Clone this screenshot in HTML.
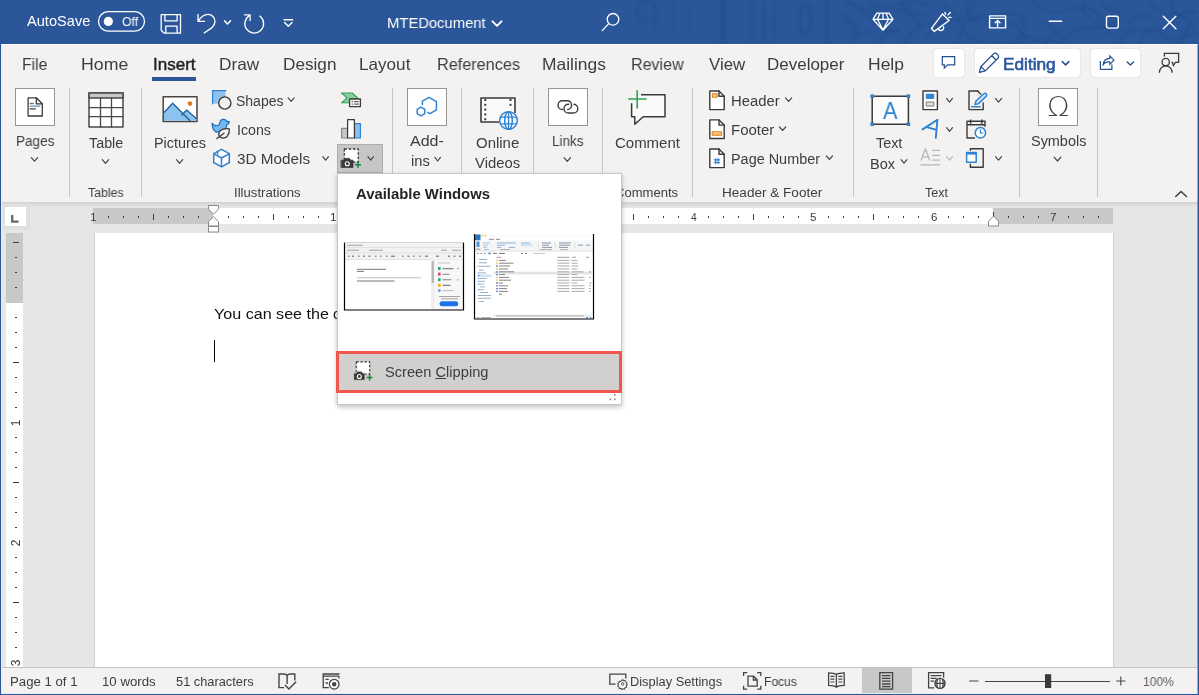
<!DOCTYPE html>
<html lang="en">
<head>
<meta charset="utf-8">
<title>MTEDocument - Word</title>
<style>
html,body{margin:0;padding:0}
body{width:1199px;height:695px;overflow:hidden;position:relative;background:#e6e6e6;font-family:"Liberation Sans",sans-serif;}
.abs{position:absolute}
.t{position:absolute;white-space:nowrap;line-height:normal;transform-origin:0 0;display:block;will-change:transform}
.t u{text-decoration:underline;text-underline-offset:1px;text-decoration-thickness:1px}
#titlebar{position:absolute;left:0;top:0;width:1199px;height:44px;background:#2b579a;overflow:hidden}
#tabs{position:absolute;left:1px;top:44px;width:1197px;height:40px;background:#f3f2f1}
#ribbon{position:absolute;left:1px;top:84px;width:1197px;height:118px;background:#f3f2f1}
#ribbonshadow{position:absolute;left:1px;top:202px;width:1197px;height:5px;background:linear-gradient(#d2d2d2,#e6e6e6)}
.box{position:absolute;background:#fff;border:1px solid #979593;box-sizing:border-box}
.sep{position:absolute;width:1px;background:#c8c6c4;top:88px;height:109px}
.pill{position:absolute;background:#fff;border-radius:3px;box-shadow:0 0 1.5px rgba(0,0,0,.22)}
#docarea{position:absolute;left:1px;top:207px;width:1197px;height:461px;background:#e6e6e6}
#page{position:absolute;left:94px;top:233px;width:1020px;height:435px;background:#fff;border-left:1px solid #d0d0d0;border-right:1px solid #d0d0d0;box-sizing:border-box}
#status{position:absolute;left:1px;top:667px;width:1197px;height:27px;background:#f3f2f1;border-top:1px solid #c4c4c4;box-sizing:border-box}
#frame{position:absolute;left:0;top:0;width:1199px;height:695px;box-sizing:border-box;border:1px solid #2b579a;border-top:none;pointer-events:none}
#dropdown{position:absolute;left:337px;top:173px;width:285px;height:232px;background:#fff;border:1px solid #c8c6c4;box-sizing:border-box;box-shadow:0 2px 5px rgba(0,0,0,.25)}
.vn{position:absolute;width:14px;height:14px;line-height:14px;font-size:12px;text-align:center;color:#3b3a39;transform:rotate(-90deg);transform-origin:50% 50%}
#frameinner{position:absolute;left:1px;top:44px;width:1197px;height:650px;box-sizing:border-box;border:1px solid #e4eefa;border-top-color:#fff;border-right-color:rgba(43,87,154,.45);pointer-events:none}
svg{position:absolute;left:0;top:0;overflow:visible}
</style>
</head>
<body>

<div id="titlebar">
<svg width="1199" height="44" viewBox="0 0 1199 44" fill="none" stroke="#1d437f" stroke-linecap="round">
<g stroke-width="3.500" stroke-opacity=".26" style="filter:blur(1.1px)">
<path d="M655 13a9 10 0 1 1-1-6M655 2v28"/>
<path d="M674 0v30M690 6v26"/>
<path d="M723 0v44" stroke-width="8"/>
<path d="M752 0v44M764 4v36" />
<path d="M775 4c-2 10-2 24 0 36"/>
<path d="M805 4a6 15 0 1 0 .1 0M827 0v42" stroke-width="4.500"/>
</g>
<g stroke-width="2.300" stroke-opacity=".34" style="filter:blur(1px)">
<path d="M846 2c10 2 18 8 24 16s16 14 28 14"/>
<path d="M845 22c6-2 10 0 14 4M850 40c8-8 18-10 28-4"/>
<path d="M868 0c6 8 18 10 28 6s22-6 30 0"/>
<path d="M905 44c6-16 22-24 38-22s28-6 32-22"/>
<path d="M898 10c10 2 18 8 22 16"/>
<path d="M960 44c-2-14 8-26 22-28s30 4 38 14 22 14 36 10"/>
<path d="M985 24a20 14 0 1 1 40 6"/>
<path d="M1030 0c10 10 24 14 38 10s26-2 34 8 20 14 32 10"/>
<path d="M1060 44c6-12 18-18 32-16s28-4 34-14"/>
<path d="M1120 44c4-10 14-16 26-14s22-2 28-10 16-10 25-8"/>
<path d="M1150 0c2 8 10 14 20 14s20 6 24 16"/>
<path d="M1160 30a14 10 0 1 0 28-4"/>
<path d="M1085 0c-4 8-2 14 6 18M1010 44c4-6 10-8 18-6"/>
<path d="M842 14c8 6 14 14 16 24M858 8c10 0 20 6 26 14"/>
<path d="M880 44c2-10 10-16 20-14M900 0c4 10 14 16 26 14"/>
<path d="M925 36c8-2 14-8 16-16M938 2c10 4 18 12 22 22s12 16 22 18"/>
<path d="M968 0c-4 10 0 18 10 22M995 40a14 9 0 1 0 26-8"/>
<path d="M1040 20c8 2 14 8 16 16M1046 44c2-8 8-12 16-12"/>
<path d="M1090 24c8-2 16 2 20 10M1100 0c2 8 10 12 20 10"/>
<path d="M1128 22c6-6 16-8 24-4M1140 44c0-8 6-14 14-14"/>
<path d="M1172 0c-2 8 2 14 10 16M1180 44c2-6 8-10 18-10"/>
</g>
</svg>

</div>
<div id="tabs"></div>
<div id="ribbon"></div>
<div id="ribbonshadow"></div>
<div id="docarea"></div>

<!-- ===== title bar ===== -->
<div id="titletext">
<span class="t" style="left:26.85px;top:13.30px;font-size:14.5px;color:#fff;transform:scaleX(1.0068)">AutoSave</span>
<span class="t" style="left:121.59px;top:13.70px;font-size:13px;color:#fff;transform:scaleX(0.9495)">Off</span>
<span class="t" style="left:387.12px;top:14.10px;font-size:15px;color:#fff;transform:scaleX(0.9855)">MTEDocument</span>
</div>
<svg width="1199" height="44" viewBox="0 0 1199 44" fill="none" stroke="#fff" stroke-width="1.3" stroke-linecap="round" stroke-linejoin="round">
<!-- autosave toggle -->
<rect x="98.5" y="11.7" width="46" height="19.4" rx="9.7"/>
<circle cx="108.3" cy="21.4" r="4.6" fill="#fff" stroke="none"/>
<!-- save -->
<path d="M161.2 14.6h19.3v18.6h-16.3l-3-3zM164.9 14.6v6.3h12.2v-6.3M165.8 33.2v-7h11.3v7"/>
<!-- undo -->
<path d="M198 14.5v6.8h6.6M198.4 21c2.5-4 6-6.600 9.600-6.600 4 0 7 3.200 7 7 0 2.600-1.200 4.400-3 6.200l-7.800 5.400" />
<path d="M224.500 20.700l3 3.200 3-3.200" stroke-width="1.500"/>
<!-- redo -->
<path d="M244.500 14.800h5.600v5.800M249.600 15.500a9.400 9.400 0 1 0 10.200 0.600"/>
<!-- qat -->
<path d="M284 19.800h8.600M284.600 22.600l3.700 3.600 3.700-3.600" stroke-width="1.400"/>
<!-- doc title chevron -->
<path d="M492.500 21.300l4.500 4.600 4.500-4.600" stroke-width="1.900"/>
<!-- search -->
<circle cx="613" cy="19.300" r="5.800"/><path d="M608.800 23.600l-6.600 7"/>
<!-- diamond -->
<path d="M876.800 13.200h12.400l3.800 6.100-10 10.900-10-10.900zM873 19.300h20M879.800 13.400l-2.300 5.900 5.500 10.700 5.500-10.700-2.300-5.900M883 13.300v6"/>
<!-- megaphone -->
<path d="M942.500 13.900l6.600 6.600-14.800 10.900-2.800-3zM938.300 28.600a2.700 2.700 0 0 0 5.200-1.600M945 12.400l.5 1.600M948 14.800l2.400-2.300M948.800 17.500l2.200-.1" stroke-width="1.400"/>
<!-- ribbon display options -->
<path d="M989.600 15.900h16v12h-16zM989.600 18.400h16M997.600 26.400v-5.800M995.200 22.800l2.400-2.400 2.400 2.400" stroke-width="1.400"/>
<!-- window controls -->
<path d="M1049.300 21.300h12.400" stroke-width="1.400"/>
<rect x="1106.500" y="16.300" width="11.800" height="11.800" rx="2" stroke-width="1.400"/>
<path d="M1163.300 16.200l12.600 12.600M1175.900 16.200l-12.600 12.600" stroke-width="1.400"/>
</svg>


<!-- ===== tabs ===== -->
<div id="tabrow">
<div class="abs" style="left:152px;top:77px;width:44px;height:4px;background:#2b579a"></div>
<div class="pill" style="left:934px;top:49.200px;width:30.300px;height:27.800px"></div>
<div class="pill" style="left:975.300px;top:49.200px;width:104.700px;height:27.800px"></div>
<div class="pill" style="left:1091.200px;top:49.200px;width:49px;height:27.800px"></div>
<svg width="1199" height="90" viewBox="0 0 1199 90" fill="none" stroke="#27508f" stroke-width="1.3" stroke-linecap="round" stroke-linejoin="round">
<!-- comments button -->
<path d="M942.300 56.700h12.400v8.100h-7.100l-3.300 3.300v-3.300h-2z" stroke-width="1.200" stroke-linejoin="miter"/>
<!-- pencil -->
<path d="M979.400 72.400l1.500-5.900 12.600-12.600a2.400 2.400 0 0 1 3.400 0l1 1a2.400 2.400 0 0 1 0 3.400l-12.600 12.600zM981 66.600l4.300 4.300M991.800 55.700l4.300 4.300" stroke-width="1.300"/>
<path d="M1062.300 61.600l3.300 3.300 3.300-3.300" stroke-width="1.500"/>
<!-- share -->
<path d="M1100.400 61.100V69.400H1111.900V64.600M1109.800 55.900L1113.900 60.200L1109.800 64.400V62C1106.800 61.800 1104.600 62.600 1103.200 64.600C1103.600 60.800 1106 58.600 1109.800 58.400Z" stroke-width="1.200" stroke-linecap="butt" stroke-linejoin="miter"/>
<path d="M1127.200 61.900l3.200 3.100 3.200-3.100" stroke-width="1.400"/>
<!-- people / catch up -->
<g stroke="#3b3a39" stroke-width="1.300" stroke-linecap="butt" stroke-linejoin="miter">
<circle cx="1165.700" cy="62.100" r="3.700"/>
<path d="M1159.300 72.800a6.450 7 0 0 1 12.900 0"/>
<path d="M1164.400 56.600v-3.200h14.200v9h-3.200l-2 3.100-.9-3.100h-1.100"/>
</g>
</svg>

<span class="t" style="left:21.96px;top:54.50px;font-size:16.5px;color:#3d3d3d;transform:scaleX(0.9517)">File</span>
<span class="t" style="left:81.23px;top:54.50px;font-size:16.5px;color:#3d3d3d;transform:scaleX(1.0730)">Home</span>
<span class="t" style="left:152.96px;top:54.50px;font-size:16.5px;color:#252423;-webkit-text-stroke:.45px #252423;transform:scaleX(1.0306)">Insert</span>
<span class="t" style="left:219.33px;top:54.50px;font-size:16.5px;color:#3d3d3d;transform:scaleX(1.0464)">Draw</span>
<span class="t" style="left:283.42px;top:54.50px;font-size:16.5px;color:#3d3d3d;transform:scaleX(1.0408)">Design</span>
<span class="t" style="left:359.41px;top:54.50px;font-size:16.5px;color:#3d3d3d;transform:scaleX(1.0374)">Layout</span>
<span class="t" style="left:436.60px;top:54.50px;font-size:16.5px;color:#3d3d3d;transform:scaleX(0.9832)">References</span>
<span class="t" style="left:542.29px;top:54.50px;font-size:16.5px;color:#3d3d3d;transform:scaleX(1.0564)">Mailings</span>
<span class="t" style="left:630.61px;top:54.50px;font-size:16.5px;color:#3d3d3d;transform:scaleX(0.9728)">Review</span>
<span class="t" style="left:708.96px;top:54.50px;font-size:16.5px;color:#3d3d3d;transform:scaleX(1.0243)">View</span>
<span class="t" style="left:767.44px;top:54.50px;font-size:16.5px;color:#3d3d3d;transform:scaleX(1.0290)">Developer</span>
<span class="t" style="left:868.31px;top:54.50px;font-size:16.5px;color:#3d3d3d;transform:scaleX(1.0598)">Help</span>
<span class="t" style="left:1003.21px;top:54.50px;font-size:16.5px;color:#2b579a;-webkit-text-stroke:.6px #2b579a;transform:scaleX(1.0439)">Editing</span>
</div>

<!-- ===== ribbon ===== -->
<div id="ribboncontent">
<div class="box" style="left:15px;top:88px;width:40px;height:38px"></div>
<div class="box" style="left:407px;top:88px;width:40px;height:38px"></div>
<div class="box" style="left:548px;top:88px;width:40px;height:38px"></div>
<div class="box" style="left:1038px;top:88px;width:40px;height:38px"></div>
<div class="abs" style="left:337px;top:144px;width:46px;height:29px;background:#c8c6c4;border:1px solid #b0aeac;box-sizing:border-box"></div>
<div class="sep" style="left:69px"></div>
<div class="sep" style="left:141px"></div>
<div class="sep" style="left:392px"></div>
<div class="sep" style="left:461px"></div>
<div class="sep" style="left:533px"></div>
<div class="sep" style="left:602px"></div>
<div class="sep" style="left:692px"></div>
<div class="sep" style="left:853px"></div>
<div class="sep" style="left:1019px"></div>
<div class="sep" style="left:1097px"></div>
<svg width="1199" height="210" viewBox="0 0 1199 210" fill="none" stroke="#3b3a39" stroke-width="1.3" stroke-linecap="round" stroke-linejoin="round">
<g><path d="M28.100 97.800h8.200l6 6v12.200h-14.200z" fill="#fff"/><path d="M36.300 97.800v6h6"/><path d="M30.300 103.500h2.800M30.300 108.900h5" stroke="#797775" stroke-width="1.600"/><path d="M30.300 106.100h9.500" stroke="#5c8fc0" stroke-width="1.400"/></g>
<path d="M31.3 157.6L34.5 161.2L37.7 157.6" stroke="#484644" stroke-width="1.2"/>
<g stroke="#4a4846" stroke-width="1.500"><rect x="89" y="93" width="34" height="34" fill="#fff"/><rect x="89" y="93" width="34" height="5" fill="#c8c6c4"/><path d="M100.500 98v29M111.500 98v29M89 107.600h34M89 116.600h34" stroke-width="1.300"/></g>
<path d="M102.3 159.7L105.5 163.3L108.7 159.7" stroke="#484644" stroke-width="1.2"/>
<g><rect x="163.200" y="96.700" width="33.800" height="24.800" fill="#fff" stroke="#484644" stroke-width="1.500"/><path d="M164 112.500l8.700-9.200 17.500 17.500h-26.200z" fill="#8ec2ee" stroke="none"/><path d="M181.600 115.100l5.100-5.100 9.500 8.600v2.200h-9z" fill="#8ec2ee" stroke="none"/><path d="M164 112.500l8.700-9.200 17.300 17.500M181.800 115l4.900-5 9.500 8.600" stroke="#1f5f9e" stroke-width="1.300"/><circle cx="190" cy="103.600" r="2.300" fill="#e07b1a" stroke="none"/></g>
<path d="M176.5 159.7L179.6 163.3L182.7 159.7" stroke="#484644" stroke-width="1.2"/>
<g><path d="M212.600 90.600h13v13h-13z" fill="#8ec2ee" stroke="none"/><path d="M212.600 103.800v-13.200h13.200" stroke="#2e83d1" stroke-width="1.300"/><circle cx="224.800" cy="103" r="6.100" fill="#f3f2f1" stroke="#3b3a39" stroke-width="1.400"/></g>
<path d="M288.1 97.9L291.1 101.3L294.2 97.9" stroke="#484644" stroke-width="1.2"/>
<g><path d="M212.200 123.200C213.500 125.600 216 126.200 218.600 125C219.600 124.400 219.800 123.600 219.900 122.600C220.100 120.400 221.600 119.300 223.400 119.300C225.400 119.300 226.600 120.400 227.200 121.800L229.400 121.700C229.200 123.400 228.200 124.400 226.800 124.800C226.600 127.400 225.200 129.600 223 130.600L216.200 132.200C213.600 130.600 212 127.200 212.200 123.200Z" fill="#74b8ef" stroke="#1e6fb8" stroke-width="1.200"/><path d="M229.300 128.800C229.800 134.600 226.600 138.600 222.200 138C219 137.400 217.800 134.400 219.400 131.800C221.200 129.200 225 128.400 229.300 128.800Z" fill="#f3f2f1" stroke="#3b3a39" stroke-width="1.300"/><path d="M216.900 138.500L224 133.200" stroke="#3b3a39" stroke-width="1.300"/></g>
<g stroke="#2e83d1" stroke-width="1.500"><path d="M221.500 149.400l7.800 4.300v8.800l-7.800 4.300-7.800-4.300v-8.800z" fill="#fff"/><path d="M213.900 153.800l7.600 4.200 7.600-4.200M221.500 158v8.600M217.600 151.600v2.400"/></g>
<path d="M322.8 156.7L325.6 160.2L328.5 156.7" stroke="#484644" stroke-width="1.2"/>
<g><path d="M341.500 93h10.600l5.600 4.800-3 2.400h-4.400v2.600h-8.800l5.600-5z" fill="#86cf9c" stroke="#2f9e5b" stroke-width="1.100"/><rect x="349.600" y="99" width="10.800" height="7.600" fill="#fff" stroke="#3b3a39" stroke-width="1.300"/><path d="M352 101.600h.6M352 104.100h.6M354.400 101.600h4M354.400 104.100h4" stroke="#605e5c" stroke-width="1.100"/></g>
<g stroke-width="1.200"><rect x="341.600" y="128.400" width="5.800" height="9.600" fill="#c8c6c4" stroke="#8a8886"/><rect x="354.600" y="123.600" width="5.800" height="14.400" fill="#8ec2ee" stroke="#2e83d1"/><rect x="347.600" y="119.600" width="6.800" height="18.400" fill="#fff" stroke="#3b3a39"/></g>
<g><rect x="344.300" y="149" width="14" height="13" fill="#fff" stroke="#3b3a39" stroke-width="1.300" stroke-dasharray="2.600 1.700" stroke-linecap="butt"/><path d="M341.400 160.200h2.600l1-1.800h4.600l1 1.800h2.400v7.200h-11.600z" fill="#3b3a39" stroke="#3b3a39" stroke-width=".8"/><circle cx="347.300" cy="163.700" r="2" fill="#3b3a39" stroke="#fff" stroke-width="1.100"/><path d="M355 164.800h6M358 161.800v6" stroke="#13883f" stroke-width="1.500" stroke-linecap="butt"/></g>
<path d="M367.9 156.7L370.7 160.2L373.5 156.7" stroke="#484644" stroke-width="1.2"/>
<g stroke="#2e83d1" stroke-width="1.500"><path d="M422.400 104.600v-3.400l6.600-3.800 7.400 4.200v8.200l-6.400 3.800-2.200-1.200"/><path d="M421 107.200l3.800 2.200v4.200l-3.800 2.200-3.800-2.200v-4.200z"/></g>
<path d="M434.9 157.4L437.7 161.0L440.5 157.4" stroke="#484644" stroke-width="1.2"/>
<g><path d="M515 113v-15h-34v24h18" fill="#fafafa" stroke="#3b3a39" stroke-width="1.600" stroke-linecap="butt"/>
<rect x="484.300" y="99.0" width="2" height="2" fill="#3b3a39" stroke="none"/>
<rect x="484.300" y="103.8" width="2" height="2" fill="#3b3a39" stroke="none"/>
<rect x="484.300" y="108.6" width="2" height="2" fill="#3b3a39" stroke="none"/>
<rect x="484.300" y="113.4" width="2" height="2" fill="#3b3a39" stroke="none"/>
<rect x="484.300" y="118.2" width="2" height="2" fill="#3b3a39" stroke="none"/>
<rect x="509.500" y="99.0" width="2" height="2" fill="#3b3a39" stroke="none"/>
<rect x="509.500" y="103.8" width="2" height="2" fill="#3b3a39" stroke="none"/>
<g stroke="#2e83d1" stroke-width="1.500"><circle cx="508.500" cy="120.500" r="8.800" fill="#fff"/><ellipse cx="508.500" cy="120.500" rx="3.800" ry="8.800"/><path d="M500.600 117.200h15.800M500.600 123.800h15.800M508.500 111.700v17.600" stroke-width="1.300"/></g></g>
<path d="M563 109.500h-.65a4.350 4.350 0 0 1 0-8.700h4.900a4.350 4.350 0 0 1 0 8.700M569.200 104.300h-.85a4.350 4.350 0 0 0 0 8.700h5.100a4.350 4.350 0 0 0 0-8.700" stroke-width="1.400" stroke-linecap="butt"/>
<path d="M564.1 157.6L567.3 161.4L570.5 157.6" stroke="#484644" stroke-width="1.2"/>
<g><path d="M641 94.800h24v22h-21.800l-8.400 7.400v-7.400h-3.200v-13.600" fill="#fafafa" stroke="#3b3a39" stroke-width="1.500" stroke-linecap="butt"/><path d="M628.200 99h18.400M637.200 90.200v18.200" stroke="#2da44e" stroke-width="1.600" stroke-linecap="butt"/></g>
<g stroke-width="1.400"><path d="M709.8 91.0h9.2l5.2 5.2v13.4h-14.4z" fill="#fff"/><path d="M719.0 91.0v5.2h5.2"/><rect x="712.400" y="93.800" width="4.800" height="3.400" fill="#f6c98f" stroke="#e3851c" stroke-width="1.100"/></g>
<g stroke-width="1.400"><path d="M709.8 119.9h9.2l5.2 5.2v13.4h-14.4z" fill="#fff"/><path d="M719.0 119.9v5.2h5.2"/><rect x="712.200" y="131.700" width="9.400" height="3.400" fill="#f6c98f" stroke="#e3851c" stroke-width="1.100"/></g>
<g stroke-width="1.400"><path d="M709.8 149.0h9.2l5.2 5.2v13.4h-14.4z" fill="#fff"/><path d="M719.0 149.0v5.2h5.2"/><path d="M715.600 158.200v6M718.200 158.200v6M713.800 159.900h6.200M713.800 162.500h6.200" stroke="#2e83d1" stroke-width="1.200" stroke-linecap="butt"/></g>
<path d="M785.5 97.9L788.6 101.3L791.7 97.9" stroke="#484644" stroke-width="1.2"/>
<path d="M779.5 127.0L782.6 130.4L785.7 127.0" stroke="#484644" stroke-width="1.2"/>
<path d="M826.3 156.0L829.4 159.4L832.5 156.0" stroke="#484644" stroke-width="1.2"/>
<g><rect x="872.200" y="96.200" width="36.200" height="28" fill="#fcfcfc" stroke="#3b3a39" stroke-width="1.500"/>
<rect x="870.4" y="94.4" width="3.600" height="3.600" fill="#2e83d1" stroke="none"/>
<rect x="906.6" y="94.4" width="3.600" height="3.600" fill="#2e83d1" stroke="none"/>
<rect x="870.4" y="122.4" width="3.600" height="3.600" fill="#2e83d1" stroke="none"/>
<rect x="906.6" y="122.4" width="3.600" height="3.600" fill="#2e83d1" stroke="none"/>
</g>
<path d="M901.1 159.6L904.0 163.2L906.9 159.6" stroke="#484644" stroke-width="1.2"/>
<g stroke-width="1.400"><rect x="923" y="91" width="14.400" height="18.600" fill="#fff"/><rect x="926.600" y="94.200" width="7.200" height="4.200" fill="#2e83d1" stroke="#2e83d1" stroke-width="1"/><rect x="926.600" y="102" width="7.200" height="4" fill="#e1dfdd" stroke="#797775" stroke-width="1"/></g>
<path d="M946.6 98.4L949.5 102.1L952.5 98.4" stroke="#484644" stroke-width="1.2"/>
<path d="M922.600 129.400l14.800-9.600-1.600 18M927.600 127.300l9 2.500" stroke="#2e83d1" stroke-width="1.900"/>
<path d="M946.6 127.6L949.5 131.3L952.5 127.6" stroke="#484644" stroke-width="1.2"/>
<g stroke="#b8b6b4" stroke-width="1.300" stroke-linecap="butt"><path d="M921 160.600l4.400-11.800 4.400 11.800M922.600 156.800h5.600"/><path d="M932.400 150.300h7.400M932.400 155.300h7.400M932.400 160.200h7.400M920.400 164.800h19.400"/></g>
<path d="M946.6 156.7L949.5 160.1L952.5 156.7" stroke="#b8b6b4" stroke-width="1.2"/>
<g stroke-width="1.400"><path d="M977.600 91h-8.600v18.600h14.200v-6.600" /><path d="M977.600 91l3 3" /><path d="M975 104.600l1-3.600 7.800-7.200a1.600 1.600 0 0 1 2.400 2.400l-7.600 7.400zM971.600 106.700h8.600" stroke="#2e83d1" stroke-width="1.500" fill="#cfe4f7"/></g>
<path d="M995.5 98.4L998.5 102.1L1001.6 98.4" stroke="#484644" stroke-width="1.2"/>
<g stroke-width="1.400"><path d="M975 138h-8v-16.800h18v5.600M967 124.800h18M970.600 119.400v4.400M981.800 119.400v4.400" stroke-linecap="butt"/><circle cx="980.400" cy="132.800" r="5.200" fill="#fff" stroke="#2e83d1" stroke-width="1.500"/><path d="M980.400 129.800v3.200h2.600" stroke="#2e83d1" stroke-width="1.200"/></g>
<g stroke-width="1.400"><path d="M970.400 150.800v-2h12.800v18.400h-12.800v-3.400" stroke-linecap="butt"/><rect x="966.600" y="152.600" width="9.600" height="9.600" fill="#fff" stroke="#2e83d1" stroke-width="1.500"/><path d="M966.600 153.400h9.600" stroke="#2e83d1" stroke-width="2.400" stroke-linecap="butt"/></g>
<path d="M995.5 156.7L998.5 160.1L1001.6 156.7" stroke="#484644" stroke-width="1.2"/>
<path d="M1054.1 157.2L1057.5 161.0L1060.9 157.2" stroke="#484644" stroke-width="1.2"/>
<path d="M1175.700 196.600l5.400-5.200 5.400 5.200" stroke-width="1.400"/>
</svg>

<span class="t" style="left:16.28px;top:133.00px;font-size:14px;color:#3d3d3d;transform:scaleX(0.9663)">Pages</span>
<span class="t" style="left:88.58px;top:135.00px;font-size:14px;color:#3d3d3d;transform:scaleX(1.0242)">Table</span>
<span class="t" style="left:154.22px;top:135.00px;font-size:14px;color:#3d3d3d;transform:scaleX(1.0293)">Pictures</span>
<span class="t" style="left:236.10px;top:93.00px;font-size:14px;color:#3d3d3d;transform:scaleX(0.9910)">Shapes</span>
<span class="t" style="left:237.38px;top:122.00px;font-size:14px;color:#3d3d3d;transform:scaleX(1.0149)">Icons</span>
<span class="t" style="left:236.84px;top:151.00px;font-size:14px;color:#3d3d3d;transform:scaleX(1.0912)">3D Models</span>
<span class="t" style="left:409.79px;top:133.00px;font-size:14px;color:#3d3d3d;transform:scaleX(1.1455)">Add-</span>
<span class="t" style="left:411.10px;top:153.00px;font-size:14px;color:#3d3d3d;transform:scaleX(1.0485)">ins</span>
<span class="t" style="left:476.03px;top:135.00px;font-size:14px;color:#3d3d3d;transform:scaleX(1.0686)">Online</span>
<span class="t" style="left:474.74px;top:155.00px;font-size:14px;color:#3d3d3d;transform:scaleX(1.0610)">Videos</span>
<span class="t" style="left:552.28px;top:133.00px;font-size:14px;color:#3d3d3d;transform:scaleX(0.9597)">Links</span>
<span class="t" style="left:614.79px;top:135.00px;font-size:14px;color:#3d3d3d;transform:scaleX(1.0699)">Comment</span>
<span class="t" style="left:730.86px;top:93.00px;font-size:14px;color:#3d3d3d;transform:scaleX(1.0598)">Header</span>
<span class="t" style="left:730.83px;top:122.00px;font-size:14px;color:#3d3d3d;transform:scaleX(1.0703)">Footer</span>
<span class="t" style="left:730.97px;top:151.00px;font-size:14px;color:#3d3d3d;transform:scaleX(1.0303)">Page Number</span>
<span class="t" style="left:876.19px;top:135.00px;font-size:14px;color:#3d3d3d;transform:scaleX(1.0267)">Text</span>
<span class="t" style="left:869.68px;top:155.50px;font-size:14px;color:#3d3d3d;transform:scaleX(1.0387)">Box</span>
<span class="t" style="left:1030.72px;top:133.00px;font-size:14px;color:#3d3d3d;transform:scaleX(1.0311)">Symbols</span>
<span class="t" style="left:87.71px;top:186.00px;font-size:12.5px;color:#3d3d3d;transform:scaleX(0.9812)">Tables</span>
<span class="t" style="left:234.01px;top:186.00px;font-size:12.5px;color:#3d3d3d;transform:scaleX(1.0527)">Illustrations</span>
<span class="t" style="left:615.03px;top:186.00px;font-size:12.5px;color:#3d3d3d;transform:scaleX(1.0444)">Comments</span>
<span class="t" style="left:721.92px;top:186.00px;font-size:12.5px;color:#3d3d3d;transform:scaleX(1.0850)">Header &amp; Footer</span>
<span class="t" style="left:924.71px;top:186.00px;font-size:12.5px;color:#3d3d3d;transform:scaleX(0.9835)">Text</span>
<span class="t" style="left:882.82px;top:97.00px;font-size:24px;color:#2e83d1;transform:scaleX(0.9047)">A</span>
<span class="t" style="left:1046.94px;top:90.50px;font-size:27px;color:#444;font-weight:200;font-family:'DejaVu Sans',sans-serif;transform:scaleX(1.0908)">Ω</span>
</div>

<!-- ===== rulers + document ===== -->
<div class="abs" style="left:3px;top:204px;width:27px;height:26px;background:#e0e0e0"></div>
<div class="abs" style="left:5px;top:207px;width:21px;height:19px;background:#fff"></div>
<div id="hruler" class="abs" style="left:93px;top:208px;width:1020px;height:16px;background:#fff">
<div class="abs" style="left:0;top:0;width:120px;height:16px;background:#c8c8c8"></div>
<div class="abs" style="left:900px;top:0;width:120px;height:16px;background:#c8c8c8"></div>
</div>
<div id="vruler" class="abs" style="left:6px;top:233px;width:17px;height:435px;background:#fff">
<div class="abs" style="left:0;top:0;width:17px;height:70px;background:#c8c8c8"></div>
</div>
<svg width="1199" height="695" viewBox="0 0 1199 695" fill="none" stroke="#3b3a39" stroke-width="1" shape-rendering="crispEdges">
<path d="M108.5 215.500v2M123.5 215.500v2M138.5 215.500v2M153.5 213.500v6M168.5 215.500v2M183.5 215.500v2M198.5 215.500v2M228.5 215.500v2M243.5 215.500v2M258.5 215.500v2M273.5 213.500v6M288.5 215.500v2M303.5 215.500v2M318.5 215.500v2M348.5 215.500v2M363.5 215.500v2M378.5 215.500v2M393.5 213.500v6M408.5 215.500v2M423.5 215.500v2M438.5 215.500v2M468.5 215.500v2M483.5 215.500v2M498.5 215.500v2M513.5 213.500v6M528.5 215.500v2M543.5 215.500v2M558.5 215.500v2M588.5 215.500v2M603.5 215.500v2M618.5 215.500v2M633.5 213.500v6M648.5 215.500v2M663.5 215.500v2M678.5 215.500v2M708.5 215.500v2M723.5 215.500v2M738.5 215.500v2M753.5 213.500v6M768.5 215.500v2M783.5 215.500v2M798.5 215.500v2M828.5 215.500v2M843.5 215.500v2M858.5 215.500v2M873.5 213.500v6M888.5 215.500v2M903.5 215.500v2M918.5 215.500v2M948.5 215.500v2M963.5 215.500v2M978.5 215.500v2M993.5 213.500v6M1008.5 215.500v2M1023.5 215.500v2M1038.5 215.500v2M1068.5 215.500v2M1083.5 215.500v2M1098.5 215.500v2"/>
<path d="M13 242.5h6M15 257.5h2M15 272.5h2M15 287.5h2M15 317.5h2M15 332.5h2M15 347.5h2M13 362.5h6M15 377.5h2M15 392.5h2M15 407.5h2M15 437.5h2M15 452.5h2M15 467.5h2M13 482.5h6M15 497.5h2M15 512.5h2M15 527.5h2M15 557.5h2M15 572.5h2M15 587.5h2M13 602.5h6M15 617.5h2M15 632.5h2M15 647.5h2"/>
<path d="M12.200 215v6.600h6.300" stroke="#666" stroke-width="2.300" shape-rendering="auto" stroke-linecap="butt"/>
<g stroke="#8a8886" fill="#fff" shape-rendering="auto" stroke-width="1"><path d="M208.500 205.500h10v3.800l-5 4.800-5-4.800z"/><path d="M208.500 226v-4.400l5-4.800 5 4.800v4.400z"/><path d="M208.500 226.500h10v5.500h-10z"/><path d="M988.500 226v-4.800l5-5.200 5 5.200v4.800z"/><path d="M993.500 212v3.500" stroke="#3b3a39"/></g>
</svg>
<span class="vn" style="left:9.1px;top:416.1px">1</span>
<span class="vn" style="left:9.1px;top:536.1px">2</span>
<span class="vn" style="left:9.1px;top:656.3px">3</span>

<div id="rulernums">
<span class="t" style="left:90.03px;top:210.80px;font-size:11.5px;color:#3b3a39;transform:scaleX(1.0196)">1</span>
<span class="t" style="left:329.79px;top:210.80px;font-size:11.5px;color:#3b3a39;transform:scaleX(1.0196)">1</span>
<span class="t" style="left:450.36px;top:210.80px;font-size:11.5px;color:#3b3a39;transform:scaleX(1.0192)">2</span>
<span class="t" style="left:570.14px;top:210.80px;font-size:11.5px;color:#3b3a39;transform:scaleX(0.9896)">3</span>
<span class="t" style="left:690.50px;top:210.80px;font-size:11.5px;color:#3b3a39;transform:scaleX(0.8817)">4</span>
<span class="t" style="left:810.09px;top:210.80px;font-size:11.5px;color:#3b3a39;transform:scaleX(0.9961)">5</span>
<span class="t" style="left:930.71px;top:210.80px;font-size:11.5px;color:#3b3a39;transform:scaleX(0.9509)">6</span>
<span class="t" style="left:1050.16px;top:210.80px;font-size:11.5px;color:#3b3a39;transform:scaleX(1.0188)">7</span>

</div>
<div id="page"></div>
<div id="doctext">
<span class="t" style="left:213.50px;top:305.20px;font-size:15px;color:#111;transform:scaleX(1.0736)">You can see the</span>
<span class="t" style="left:332.80px;top:305.20px;font-size:15px;color:#111;transform:scaleX(0.9800)">captured window in the document now</span>
<div class="abs" style="left:214px;top:340px;width:1px;height:22px;background:#000"></div>
</div>

<!-- ===== screenshot dropdown ===== -->
<div id="dropdown"></div>
<div id="dropcontent">
<div class="abs" style="left:336px;top:351px;width:286px;height:42px;box-sizing:border-box;border:3px solid #f0564c;background:#d2d0ce"></div>
<svg width="1199" height="695" viewBox="0 0 1199 695" fill="none">
<!-- thumbnail 1 : pdf reader window -->
<g>
<rect x="344.500" y="242.500" width="119" height="67.500" fill="#fff"/>
<rect x="345" y="243" width="118" height="16.500" fill="#f2f2f2"/>
<path d="M345 247.500h118M345 253h118M345 259.500h118" stroke="#dcdcdc" stroke-width=".8"/>
<path d="M347 245.200h16M347 250.200h12M369 250.200h14M441 250.200h6M452 250.200h9" stroke="#a5a5a5" stroke-width="1.100"/>
<path d="M348 256.300h1.500M352 256.300h2M358 256.300h1.500M363 256.300h2M368.500 256.300h2M375 256.300h1.500M380 256.300h1.500M386 256.300h1.500M391 256.300h4M402 256.300h1.500M407.500 256.300h2M413 256.300h1.500M419 256.300h1.500M425 256.300h3M436 256.300h3M448 256.300h2M453.500 256.300h2M459 256.300h2" stroke="#8c8c8c" stroke-width="1.400"/>
<rect x="431" y="259.500" width="4" height="50" fill="#f0f0f0"/><rect x="431.600" y="261" width="2.400" height="22" fill="#b9b9b9"/>
<rect x="435.500" y="259.500" width="27.500" height="50" fill="#f7f7f7"/>
<path d="M438 263h12" stroke="#c4c4c4" stroke-width="1"/>
<rect x="438" y="267" width="2.600" height="3" fill="#2aa876"/><rect x="438" y="272.600" width="2.600" height="3" fill="#d9417c"/><rect x="438" y="278.200" width="2.600" height="3" fill="#2aa876"/><rect x="438" y="283.800" width="2.600" height="3" fill="#f2b31b"/><rect x="438" y="289.400" width="2.600" height="2.400" fill="#6a8fe0"/>
<path d="M442.500 268.600h11M442.500 274.200h7M442.500 279.800h9M442.500 285.400h8" stroke="#858585" stroke-width="1.100"/><path d="M442.500 290.600h11" stroke="#b8b8b8" stroke-width="1"/>
<path d="M457 268.600h1.500M457 279.800h1.500" stroke="#9a9a9a" stroke-width="1.200"/>
<path d="M439 296.500h21M441 298.800h17" stroke="#9a9a9a" stroke-width=".9"/>
<rect x="439.600" y="301.200" width="18.600" height="5" rx="2.500" fill="#1b74e8"/>
<path d="M357 269.300h29M357 271.400h7M357 281h37.500" stroke="#777" stroke-width="1"/><path d="M357 277.800h64" stroke="#b0b0b0" stroke-width=".8"/>
<path d="M344.500 242.500v67.500h119v-67.500" stroke="#000" stroke-width="1.200"/><path d="M344.500 242.500h119" stroke="#c9c9c9" stroke-width=".8"/>
</g>
<!-- thumbnail 2 : file explorer window -->
<g>
<rect x="474.500" y="234" width="119" height="85" fill="#fff"/>
<rect x="475" y="234.500" width="118" height="3.200" fill="#fbfbfb"/>
<rect x="475" y="234.500" width="5.500" height="6" fill="#2a74c8"/><rect x="481.500" y="235" width="1.600" height="1.600" fill="#f5c542"/><rect x="484.500" y="235" width="1.600" height="1.600" fill="#f5c542"/>
<path d="M489 239.300h5M496 239.300h4" stroke="#8a8a8a" stroke-width="1"/>
<rect x="475" y="240.500" width="118" height="10.500" fill="#f5f6f7"/>
<path d="M475 251h118" stroke="#dadbdc" stroke-width=".8"/>
<rect x="476.500" y="241.500" width="3" height="5.500" fill="#4f93d8"/><path d="M476 249.200h4.500" stroke="#8a8a8a" stroke-width=".9"/>
<path d="M483 243h7M483 245.200h5M483 247.400h4M484 249.600h5" stroke="#a5c2e2" stroke-width="1"/>
<path d="M497 243h19M497 245.200h8M497 247.400h4M509 247.400h6M521 243h9M521 245.200h10" stroke="#8fb0d8" stroke-width="1"/><rect x="520.500" y="244.200" width="12" height="2" fill="#cde3f8"/>
<path d="M538.500 242v7M555 242v7M575 242v7" stroke="#dcdcdc" stroke-width=".8"/>
<path d="M542 243h9M542 245.200h7M542 247.400h10M559 243h12M559 245.200h11M559 247.400h9M578 245.200h5M586 245.200h4" stroke="#8c98a8" stroke-width="1"/>
<path d="M500 249.600h10M540 249.600h12M560 249.600h8" stroke="#9c9c9c" stroke-width=".8"/>
<path d="M477 253.400h1.500M480.500 253.400h1.500M484 253.400h1.500" stroke="#777" stroke-width="1"/><path d="M488.500 253.400h2" stroke="#2a74c8" stroke-width="1.600"/><path d="M493 253.400h4M499 253.400h6M521 253.400h2M525 253.400h2" stroke="#666" stroke-width=".9"/><path d="M533 253.400h12" stroke="#b9b9b9" stroke-width=".8"/>
<path d="M496.500 257.300h5M557.500 257.300h12M572 257.300h4M586 257.300h3" stroke="#8a8a8a" stroke-width=".8"/>
<!-- nav pane -->
<path d="M479 259.500h8M479 262.800h8M477.500 266.300h13M479 270h4.500M480 272.900h6M480 275.700h6M480 278.500h7M480 281.300h5M480 284.100h4M480 286.900h5M480 289.700h4M480 292.500h8M478 295.500h13M478 298.300h13M479 301.500h5" stroke="#9fb0c4" stroke-width="1"/>
<rect x="477.500" y="274.500" width="14" height="2.600" fill="#cfe3f7"/><path d="M478.200 272.900h1.200M478.200 275.700h1.200M478.200 278.500h1.200M478.200 281.300h1.200M478.200 284.100h1.200M478.200 289.700h1.200" stroke="#2f7fd1" stroke-width="1.200"/>
<!-- file rows -->
<rect x="493.500" y="271.700" width="98.500" height="2.700" fill="#e3e3e3"/>
<g stroke-width="1.300">
<path d="M496.200 260.400h1.600M496.200 263.200h1.600M496.200 269h1.600M496.200 277.400h1.600M496.200 280.200h1.600" stroke="#e8b93a"/>
<path d="M496.200 266h1.600M496.200 271.800h1.600M496.200 274.600h1.600M496.200 283h1.600M496.200 285.800h1.600M496.200 288.600h1.600M496.200 291.400h1.600" stroke="#3d6fb8"/>
</g>
<path d="M499 260.400h7M499 263.200h14.500M499 266h11M499 269h9M499 271.800h15M499 274.600h6M499 277.400h10M499 280.200h12M499 283h4M499 285.800h9M499 288.600h8M499 291.400h9M499 294.200h3" stroke="#858585" stroke-width="1"/>
<path d="M557.500 260.400h12M557.500 263.200h12M557.500 266h12M557.500 269h12M557.500 271.800h12M557.500 274.600h12M557.500 277.400h12M557.500 280.200h12M557.500 283h12M557.500 285.800h12M557.500 288.600h12M557.500 291.400h12M571.500 260.400h6M571.500 263.200h6M571.500 266h7M571.500 269h6M571.500 271.800h12M571.500 274.600h6M571.500 277.400h13M571.500 280.200h13M571.500 283h6M571.500 285.800h13M571.500 288.600h13M571.500 291.400h13M589 271.800h2M589 277.400h2M589 283h2.500M589 285.800h2M589 288.600h2M589 291.400h2" stroke="#a2a2a2" stroke-width=".9"/>
<rect x="493.500" y="314.600" width="98" height="2.400" fill="#f0f0f0"/><rect x="496" y="315" width="88" height="1.600" fill="#c9c9c9"/>
<path d="M476.500 317.600h3M481 317.600h10" stroke="#999" stroke-width=".8"/><path d="M586 317.600h2M589.500 317.600h2" stroke="#5b9bd5" stroke-width="1.200"/>
<path d="M474.500 234v85h119v-85" stroke="#000" stroke-width="1.200"/>
</g>
<!-- screen clipping icon -->
<g stroke-linejoin="round">
<rect x="356.300" y="361.800" width="13.400" height="12.400" fill="#fff" stroke="#3b3a39" stroke-width="1.200" stroke-dasharray="2.500 1.600"/>
<path d="M353.600 373h2.600l1-1.700h4.400l1 1.700h2.400v7.200h-11.400z" fill="#3b3a39" stroke="#d2d0ce" stroke-width=".8"/><circle cx="359.300" cy="376.500" r="2" fill="#3b3a39" stroke="#fff" stroke-width="1.100"/>
<path d="M366.600 377.500h6M369.600 374.500v6" stroke="#13883f" stroke-width="1.500"/>
</g>
<!-- resize grip -->
<g fill="#8a8886"><rect x="614" y="394" width="1.600" height="1.600"/><rect x="609.600" y="398.600" width="1.600" height="1.600"/><rect x="614" y="398.600" width="1.600" height="1.600"/></g>
</svg>

<span class="t" style="left:355.80px;top:185.50px;font-size:14.3px;color:#252423;font-weight:700;transform:scaleX(1.0399)">Available Windows</span>
<span class="t" style="left:384.96px;top:364.30px;font-size:14.5px;color:#3d3d3d;transform:scaleX(1.0102)">Screen <u>C</u>lipping</span>
</div>

<!-- ===== status bar ===== -->
<div id="status"></div>
<div id="statuscontent">
<div class="abs" style="left:862px;top:668px;width:50px;height:26px;background:#c8c8c8"></div>
<span class="t" style="left:10.19px;top:674.50px;font-size:12.5px;color:#3d3d3d;transform:scaleX(1.0559)">Page 1 of 1</span>
<span class="t" style="left:102.34px;top:674.50px;font-size:12.5px;color:#3d3d3d;transform:scaleX(1.0590)">10 words</span>
<span class="t" style="left:175.89px;top:674.50px;font-size:12.5px;color:#3d3d3d;transform:scaleX(1.0250)">51 characters</span>
<span class="t" style="left:629.74px;top:674.50px;font-size:12.5px;color:#3d3d3d;transform:scaleX(1.0270)">Display Settings</span>
<span class="t" style="left:764.04px;top:674.50px;font-size:12.5px;color:#3d3d3d;transform:scaleX(0.9653)">Focus</span>
<span class="t" style="left:1143.10px;top:674.50px;font-size:12.5px;color:#605e5c;transform:scaleX(0.9615)">100%</span>
</div>
<svg width="1199" height="695" viewBox="0 0 1199 695" fill="none" stroke="#444" stroke-width="1.300" stroke-linecap="butt" stroke-linejoin="miter">
<!-- proofing book -->
<path d="M284.200 687.600h-5.200v-13.600h4.600c1.800 0 3 .6 3.500 1.800 .5-1.200 1.700-1.800 3.500-1.800h4.200v6.400M287.100 676v8M285 685l3.900 3.900 7.200-7.200" stroke-width="1.400"/>
<!-- macro recording -->
<path d="M322.500 674h17M323.200 676.200h15.800M323.200 674v13.600h5.600M339 676.200v2.400" stroke-width="1.300"/><path d="M325.600 679.400h3.200M325.600 683h2.400" stroke-width="1.400"/>
<circle cx="334.200" cy="684.200" r="4.800" fill="#fff" stroke-width="1.300"/><circle cx="334.200" cy="684.200" r="2.200" fill="#444" stroke="none"/>
<!-- display settings -->
<path d="M615.600 684.200h-5.800v-10h16v4.400" stroke-width="1.300"/>
<g transform="translate(622.700 683.900) scale(.84) translate(-621.300 -683.600)"><path d="M621.300 678.400l1 1.500 1.800-.5.500 1.800 1.700.6-.6 1.700 1.100 1.400-1.400 1.200.3 1.800-1.800.3-.7 1.700-1.700-.7-1.500 1.100-1.100-1.500-1.800.2-.2-1.800-1.600-.9.900-1.600-.9-1.600 1.600-.9.200-1.800 1.800.2z" fill="#fff" stroke-width="1.200" stroke-linejoin="round"/><circle cx="621.300" cy="683.600" r="1.500" stroke-width="1.100"/></g>
<!-- focus -->
<path d="M743.600 676v-3.400h3.600M757.200 672.600h3.600v3.400M760.800 685.800v3.400h-3.600M747.200 689.200h-3.600v-3.400" stroke-width="1.300"/>
<path d="M748 676.200h5.600l3.600 3.600v6.400h-9.200zM753.400 676.400v3.600h3.600" stroke-width="1.300"/>
<!-- read mode -->
<path d="M836.400 674.600c-1.600-1.400-4.200-1.800-7.800-1.800v12.600c3.600 0 6.200.4 7.800 1.800 1.600-1.400 4.200-1.800 7.800-1.800v-12.600c-3.600 0-6.200.4-7.800 1.800zM836.400 674.600v12.600" stroke-width="1.300"/>
<path d="M830.400 676.400h4M830.400 679.200h4M830.400 682h4M838.400 676.400h4M838.400 679.200h4M838.400 682h4" stroke-width="1.200"/>
<!-- print layout -->
<path d="M879.800 672.600h12.800v16.600h-12.800z" stroke-width="1.300"/><path d="M882 675.600h8.400M882 678.400h8.400M882 681.200h8.400M882 684h8.400M882 686.600h8.400" stroke-width="1.300"/>
<!-- web layout -->
<path d="M934.200 687.800h-5.600v-15.200h15v5.200" stroke-width="1.300"/><path d="M930.600 675.600h10.800M930.600 678.400h6M930.600 681.200h3.400" stroke-width="1.200"/>
<circle cx="940" cy="683.400" r="5" fill="#fff" stroke-width="1.400"/><path d="M935 683.400h10M940 678.400v10M937.600 679c-1.200 2.800-1.200 6 0 8.800M942.400 679c1.200 2.800 1.200 6 0 8.800" stroke-width="1.100"/>
<!-- zoom slider -->
<path d="M969.200 681h9.200M985 681.500h125M1116.200 681h9.200M1120.800 676.600v8.800" stroke="#484644" stroke-width="1.100"/>
<rect x="1045" y="674.200" width="6.200" height="13.800" fill="#3b3a39" stroke="none"/>
</svg>


<div id="frameinner"></div>
<div id="frame"></div>
</body>
</html>
